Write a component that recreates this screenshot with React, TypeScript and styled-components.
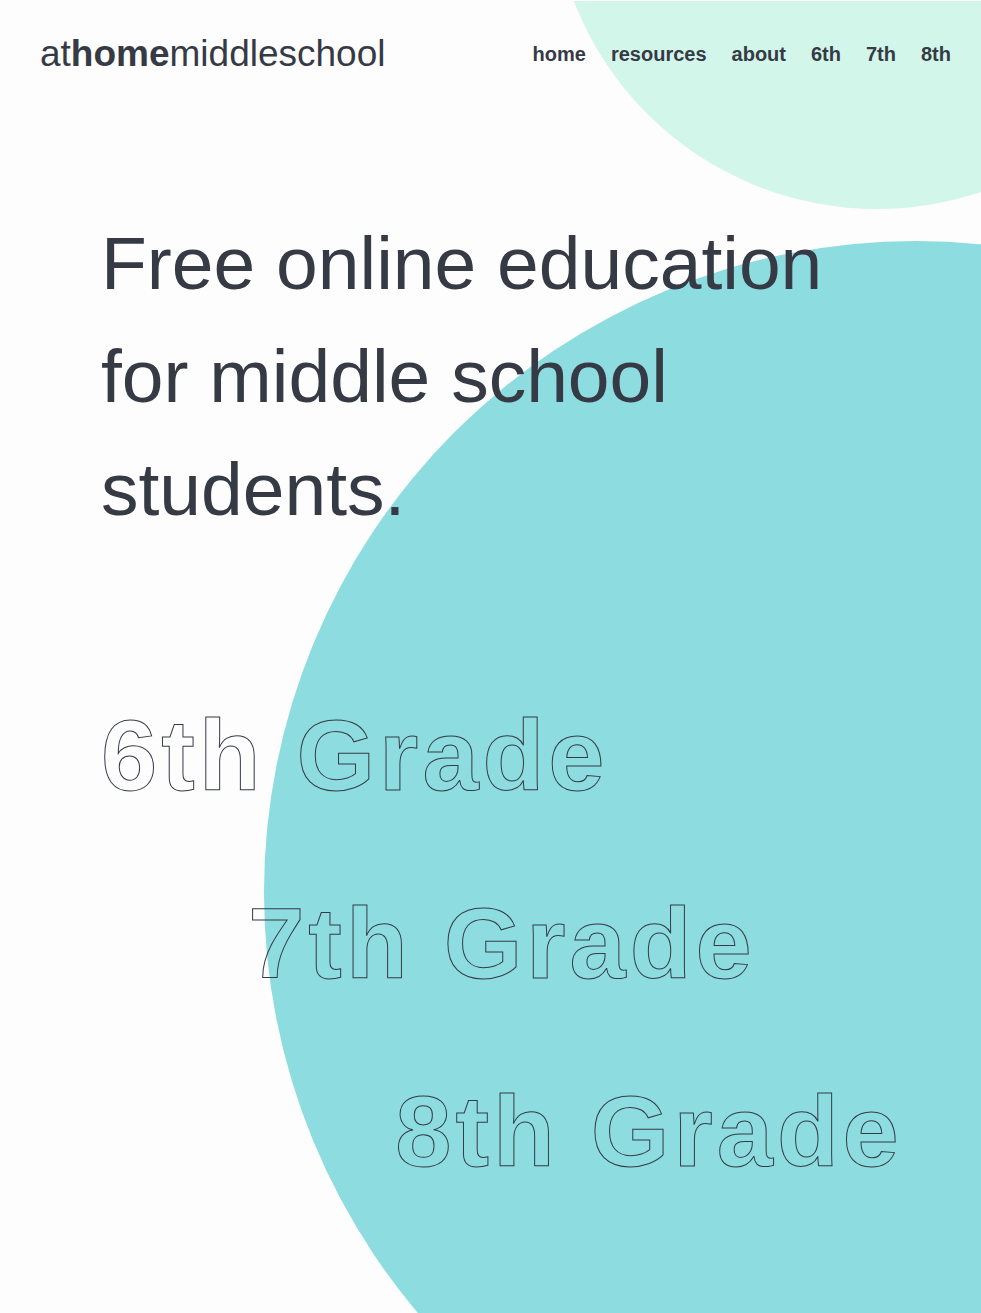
import React from "react";
import styled, { createGlobalStyle } from "styled-components";

const ink = "#363a45";

const GlobalStyle = createGlobalStyle`
  *, *::before, *::after { box-sizing: border-box; }
  body {
    margin: 0;
    background: #fdfdfd;
    color: ${ink};
    font-family: Arial, "Liberation Sans", sans-serif;
  }
`;

const Page = styled.div`
  position: relative;
  isolation: isolate;
  min-height: 100vh;
  overflow: hidden;
  border-top: 1px solid #fdfdfd;
`;

const Circle = styled.div<{ $size: number; $top: number; $right: number; $color: string }>`
  position: absolute;
  z-index: -1;
  top: ${(p) => p.$top}px;
  right: ${(p) => p.$right}px;
  width: ${(p) => p.$size}px;
  height: ${(p) => p.$size}px;
  border-radius: 50%;
  background: ${(p) => p.$color};
`;

const Header = styled.header`
  display: flex;
  flex-wrap: wrap;
  align-items: center;
  justify-content: space-between;
  padding: 29px 30px 28px 40px;
`;

const Logo = styled.a`
  color: inherit;
  font-size: 37px;
  line-height: 48px;
  text-decoration: none;
`;

const Nav = styled.nav`
  display: flex;
  flex-wrap: wrap;
  gap: 25px;
`;

const NavLink = styled.a`
  color: inherit;
  font-size: 20px;
  font-weight: 700;
  line-height: 48px;
  text-decoration: none;
`;

const Main = styled.main`
  padding: 101px 0 80px 101px;
`;

const Title = styled.h1`
  max-width: 800px;
  margin: 0;
  font-size: 75px;
  font-weight: 400;
  line-height: 113px;
`;

const Grades = styled.nav`
  display: flex;
  flex-direction: column;
  align-items: flex-start;
  gap: 38px;
  margin-top: 134px;
`;

const GradeLink = styled.a<{ $step: number }>`
  margin-left: ${(p) => p.$step * 15}vw;
  color: transparent;
  font-size: 101px;
  font-weight: 700;
  letter-spacing: 4px;
  line-height: 150px;
  text-decoration: none;
  white-space: nowrap;
  -webkit-text-stroke: 1px ${ink};
`;

const links = ["home", "resources", "about", "6th", "7th", "8th"];
const grades = ["6th Grade", "7th Grade", "8th Grade"];

export default function App() {
  return (
    <>
      <GlobalStyle />
      <Page>
        <Circle $size={650} $top={-442} $right={-221} $color="#d2f6ea" />
        <Circle $size={1303} $top={240} $right={-586} $color="#8cdce0" />
        <Header>
          <Logo href="#home">
            at<b>home</b>middleschool
          </Logo>
          <Nav aria-label="Main">
            {links.map((label) => (
              <NavLink key={label} href={`#${label}`}>
                {label}
              </NavLink>
            ))}
          </Nav>
        </Header>
        <Main>
          <Title>Free online education for middle school students.</Title>
          <Grades aria-label="Grades">
            {grades.map((label, i) => (
              <GradeLink key={label} href={`#${label.slice(0, 3)}`} $step={i}>
                {label}
              </GradeLink>
            ))}
          </Grades>
        </Main>
      </Page>
    </>
  );
}
